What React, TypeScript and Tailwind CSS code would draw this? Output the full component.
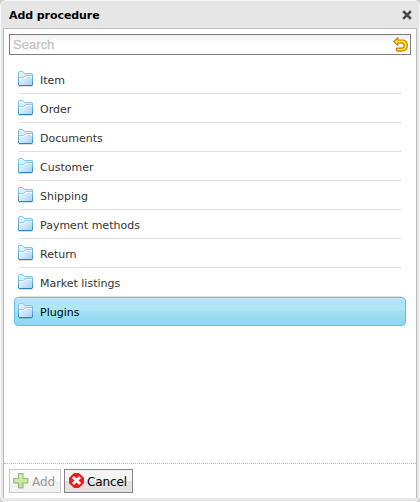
const items = [
  'Item',
  'Order',
  'Documents',
  'Customer',
  'Shipping',
  'Payment methods',
  'Return',
  'Market listings',
];

function FolderIcon() {
  return (
    <svg width="16" height="16" viewBox="0 0 16 16" className="block shrink-0">
      <defs>
        <linearGradient id="folder" x1="0" y1="0" x2="1" y2="1">
          <stop offset="0" stopColor="#e4f4fd" />
          <stop offset="0.5" stopColor="#d3e9fa" />
          <stop offset="1" stopColor="#9fd0f4" />
        </linearGradient>
        <linearGradient id="folderEdge" x1="0" y1="0" x2="0" y2="1">
          <stop offset="0" stopColor="#8ccbec" />
          <stop offset="0.5" stopColor="#6db5e0" />
          <stop offset="1" stopColor="#2f80bd" />
        </linearGradient>
      </defs>
      <path d="M.5 14V1L1 .5H4.8L6.5 2.5H14L14.5 3V14L14 14.5H1Z" fill="url(#folder)" stroke="url(#folderEdge)" />
      <path d="M1 6.5H5.5L7.5 4.5H14" fill="none" stroke="#8fcdf0" />
      <path d="M1.5 7.5H6L8 5.5H13.5V6.5" fill="none" stroke="#fff" strokeOpacity=".8" />
      <path d="M1.5 7V13.5" fill="none" stroke="#fff" strokeOpacity=".45" />
      <path d="M1 15.5H15" stroke="#000" strokeOpacity=".13" />
    </svg>
  );
}

function UndoIcon() {
  return (
    <svg width="15" height="15" viewBox="0 0 15 15" className="block shrink-0">
      <path
        d="M.7 4.6L4.8 .8V3H9.5C12.4 3 14.3 5.1 14.3 8.3C14.3 11.7 12.3 14.2 9 14.2H4.2L3.6 13.5V11.2H8.8C10.4 11.2 11.1 10.1 11.1 8.5C11.1 7 10.4 6.2 9 6.2H4.8V8.4Z"
        fill="#ffe614"
        stroke="#cf7a18"
        strokeWidth="1.2"
        strokeLinejoin="round"
      />
    </svg>
  );
}

function CloseIcon() {
  return (
    <svg width="10" height="10" viewBox="0 0 10 10" className="block">
      <path d="M2 2L8 8M8 2L2 8" stroke="#4a4a4a" strokeWidth="2.5" strokeLinecap="square" />
    </svg>
  );
}

function AddIcon() {
  return (
    <svg width="16" height="16" viewBox="0 0 16 16" className="block shrink-0">
      <defs>
        <linearGradient id="plus" x1="0" y1="0" x2="0" y2="1">
          <stop offset="0" stopColor="#e0f5bd" />
          <stop offset="1" stopColor="#b4e378" />
        </linearGradient>
      </defs>
      <path d="M5.5 .7H10V5.5H14.8V10H10V14.8H5.5V10H.7V5.5H5.5Z" fill="url(#plus)" stroke="#9cb58a" strokeWidth="1.2" strokeLinejoin="round" />
    </svg>
  );
}

function CancelIcon() {
  return (
    <svg width="16" height="16" viewBox="0 0 16 16" className="block shrink-0">
      <path d="M4.8 .7H10.2L14.3 4.8V10.2L10.2 14.3H4.8L.7 10.2V4.8Z" fill="#f51c1c" stroke="#da0a0a" strokeLinejoin="round" />
      <path d="M4.9 4.9L10.1 10.1M10.1 4.9L4.9 10.1" stroke="#fff" strokeWidth="2.8" strokeLinecap="square" />
    </svg>
  );
}

export default function App() {
  return (
    <div className="h-[502px] w-[420px] bg-[#d0d0d0] font-['DejaVu_Sans',sans-serif]">
      <div className="flex h-[502px] w-[420px] flex-col rounded-[6px] border border-[#f8f8f8] bg-[#e6e6e6] px-[2px] pb-[3px]">
        <header className="flex h-[27px] shrink-0 items-center justify-between pr-[5px] pl-[6px]">
          <h1 className="pt-[3px] text-[11px] leading-[14px] font-bold tracking-[-0.07px] text-black">Add procedure</h1>
          <CloseIcon />
        </header>
        <main className="flex min-h-0 flex-1 flex-col border border-b-0 border-[#bdbdbd] bg-white">
          <div className="mx-[5px] mt-[5px] flex h-[21px] shrink-0 items-start justify-between border border-[#7c7c7c] bg-linear-to-b from-[#f0f0f0] to-white to-40% pt-[2px] pr-[2px] pl-[3px]">
            <span className="font-['Liberation_Sans',sans-serif] text-[13px] leading-[16px] text-[#c0c0c0] [-webkit-text-stroke:0.3px_#c8c8c8]">Search</span>
            <UndoIcon />
          </div>
          <ul className="mt-[10px] flex-1 px-[10px]">
            {items.map((name) => (
              <li key={name} className="h-[29px] px-[5px]">
                <div className="flex h-[29px] items-start border-b border-[#dedede] pt-[6px]">
                  <div className="-ml-px">
                    <FolderIcon />
                  </div>
                  <span className="pt-[3px] pl-[6px] text-[11px] leading-[14px] text-[#333]">{name}</span>
                </div>
              </li>
            ))}
            <li className="flex h-[29px] items-start rounded-[4px] border border-[#5fc3e2] bg-linear-to-b from-[#afe6f6] from-50% via-[#a2e1f5] via-50% to-[#8ad8f1] pt-[5px] pl-[3px] shadow-[inset_0_1px_0_#c6eef9]">
              <FolderIcon />
              <span className="pt-[3px] pl-[6px] text-[11px] leading-[14px] text-black">Plugins</span>
            </li>
          </ul>
          <footer className="flex h-[35px] shrink-0 gap-[3px] border-t border-dotted border-[#bcbcbc] px-[5px] pt-[5px]">
            <button disabled className="flex h-[24px] w-[52px] items-center border border-[#c8c8c8] bg-linear-to-b from-[#fafafa] from-50% to-[#f2f2f2] to-50% pl-[3px]">
              <AddIcon />
              <span className="pt-[3px] pl-[3px] text-[12px] leading-[15px] text-[#999]">Add</span>
            </button>
            <button className="flex h-[24px] w-[69px] items-center border border-[#848484] bg-linear-to-b from-[#f4f4f4] from-50% to-[#e2e2e2] to-50% pl-[4px]">
              <CancelIcon />
              <span className="pt-[3px] pl-[2px] text-[12px] leading-[15px] tracking-[-0.1px] text-black">Cancel</span>
            </button>
          </footer>
        </main>
      </div>
    </div>
  );
}
